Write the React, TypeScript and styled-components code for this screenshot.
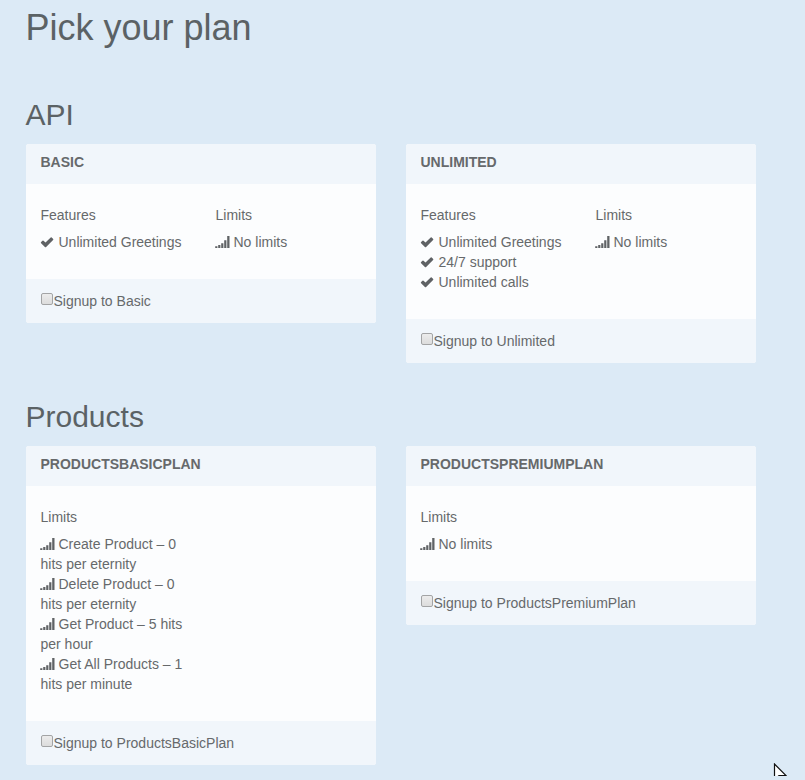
import React from "react";
import styled, { createGlobalStyle } from "styled-components";

const GlobalStyle = createGlobalStyle`
  * { box-sizing: border-box; }
  body {
    margin: 0;
    background: #dceaf6;
    color: #66696b;
    font: 14px/20px "Liberation Sans", Arial, sans-serif;
    overflow: hidden;
  }
`;

const Page = styled.main`
  position: relative;
  height: 780px;
  padding: 8px 49px 0 26px;
  overflow: hidden;
`;

const PageTitle = styled.h1`
  margin: 0 0 0 -0.5px;
  font-size: 36px;
  font-weight: 400;
  line-height: 40px;
  color: #5b6265;
`;

const Section = styled.section<{ $gap: number }>`
  margin-top: ${(p) => p.$gap}px;
`;

const SectionTitle = styled.h2`
  margin: 0 0 13px -0.5px;
  font-size: 30px;
  font-weight: 400;
  line-height: 33px;
  color: #5b6265;
`;

const Plans = styled.div`
  display: grid;
  grid-template-columns: 350px 350px;
  column-gap: 30px;
  align-items: start;
`;

const Card = styled.article`
  background: #fcfdfe;
  border-radius: 3px;
  overflow: hidden;
`;

const CardHeader = styled.h3`
  margin: 0;
  height: 40px;
  padding: 8px 14.5px 12px;
  background: #f1f6fb;
  font-size: 14px;
  font-weight: 700;
  line-height: 20px;
  text-transform: uppercase;
`;

const CardBody = styled.div`
  display: grid;
  grid-template-columns: 145px 145px;
  column-gap: 30px;
  padding: 21px 14.5px 27px;
`;

const ColumnTitle = styled.div`
  margin-bottom: 7px;
`;

const List = styled.ul`
  margin: 0;
  padding: 0;
  list-style: none;
`;

const Icon = styled.svg`
  width: 15px;
  height: 14px;
  margin: 0 3.7px 0 -0.7px;
  vertical-align: -2px;
  fill: #5f6265;
`;

const CardFooter = styled.label`
  display: flex;
  height: 44px;
  padding: 12px 14.5px;
  background: #f1f6fb;
`;

const Checkbox = styled.input`
  appearance: none;
  flex: none;
  width: 12px;
  height: 12px;
  margin: 2px 0.5px 0;
  border: 1px solid #a3a4a5;
  border-radius: 2px;
  background: linear-gradient(#ececec, #dcdcdc);
`;

const Pointer = styled.svg`
  position: absolute;
  left: 773px;
  top: 763px;
  width: 14px;
  height: 13px;
`;

const CheckIcon = () => (
  <Icon viewBox="0 0 15 14">
    <path d="M1.1 7.1 2.5 5.7Q3 5.3 3.5 5.7L5.5 7.6 10.7 2.5Q11.2 2 11.7 2.5L13.2 4Q13.6 4.5 13.1 5L6.1 12Q5.5 12.5 4.9 12L1.1 8.2Q.5 7.7 1.1 7.1Z" />
  </Icon>
);

const SignalIcon = () => (
  <Icon viewBox="0 0 15 14">
    <path d="M.2 11.2h2.2V13H.2zM3.2 10.1h2.2V13H3.2zM6.2 8.2h2.2V13H6.2zM9.2 5.2h2.2V13H9.2zM12.2 1.1h2.3V13h-2.3z" />
  </Icon>
);

type Plan = { name: string; features?: string[]; limits: string[] };

const groups: { title: string; gap: number; plans: Plan[] }[] = [
  {
    title: "API",
    gap: 50,
    plans: [
      { name: "Basic", features: ["Unlimited Greetings"], limits: ["No limits"] },
      {
        name: "Unlimited",
        features: ["Unlimited Greetings", "24/7 support", "Unlimited calls"],
        limits: ["No limits"],
      },
    ],
  },
  {
    title: "Products",
    gap: 37,
    plans: [
      {
        name: "ProductsBasicPlan",
        limits: [
          "Create Product – 0 hits per eternity",
          "Delete Product – 0 hits per eternity",
          "Get Product – 5 hits per hour",
          "Get All Products – 1 hits per minute",
        ],
      },
      { name: "ProductsPremiumPlan", limits: ["No limits"] },
    ],
  },
];

const PlanCard = ({ plan }: { plan: Plan }) => (
  <Card>
    <CardHeader>{plan.name}</CardHeader>
    <CardBody>
      {plan.features && (
        <div>
          <ColumnTitle>Features</ColumnTitle>
          <List>
            {plan.features.map((item) => (
              <li key={item}><CheckIcon />{item}</li>
            ))}
          </List>
        </div>
      )}
      <div>
        <ColumnTitle>Limits</ColumnTitle>
        <List>
          {plan.limits.map((item) => (
            <li key={item}><SignalIcon />{item}</li>
          ))}
        </List>
      </div>
    </CardBody>
    <CardFooter>
      <Checkbox type="checkbox" />
      Signup to {plan.name}
    </CardFooter>
  </Card>
);

export default function App() {
  return (
    <>
      <GlobalStyle />
      <Page>
        <PageTitle>Pick your plan</PageTitle>
        {groups.map((group) => (
          <Section key={group.title} $gap={group.gap}>
            <SectionTitle>{group.title}</SectionTitle>
            <Plans>
              {group.plans.map((plan) => (
                <PlanCard key={plan.name} plan={plan} />
              ))}
            </Plans>
          </Section>
        ))}
        <Pointer viewBox="0 0 14 13">
          <path d="M1.5 1v16L6 12.5h7Z" fill="#fff" stroke="#111" strokeWidth="1.2" />
        </Pointer>
      </Page>
    </>
  );
}
